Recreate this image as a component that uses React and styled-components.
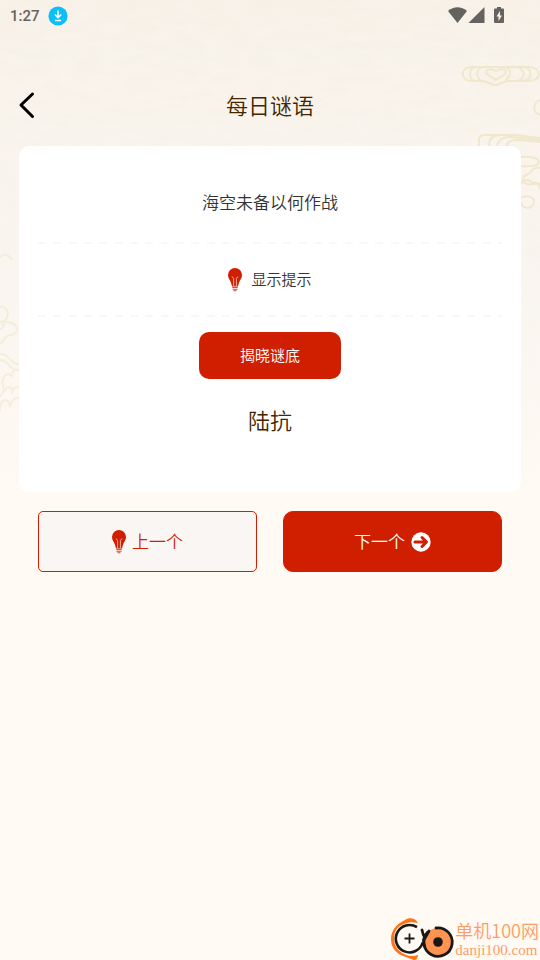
import React from 'react';
import styled, { createGlobalStyle } from 'styled-components';

const GlobalStyle = createGlobalStyle`
  *, *::before, *::after { box-sizing: border-box; }
  body {
    margin: 0;
    background: #fffaf3;
    color: #333;
    font-family: "Noto Sans CJK SC", sans-serif;
    font-weight: 350;
  }
  button { font: inherit; cursor: pointer; }
`;

const Page = styled.div`
  position: relative;
  min-height: 100vh;
  display: flex;
  flex-direction: column;
  background: linear-gradient(#f6f0e6 0, #f8f3eb 160px, #f9f5ef 300px, #fffaf3 500px);
  overflow: hidden;
`;

const Clouds = styled.svg`
  position: absolute;
  top: ${(p) => p.$top};
  left: ${(p) => p.$left || 'auto'};
  right: ${(p) => p.$right || 'auto'};
  fill: none;
  stroke: #efe6c8;
  stroke-width: 2;
  opacity: ${(p) => p.$opacity || 1};
`;

const PaperGrain = styled.svg`
  position: absolute;
  inset: 0;
  width: 100%;
  height: 480px;
  opacity: 0.35;
  mask-image: linear-gradient(#000 40%, transparent);
`;

const StatusBar = styled.div`
  position: relative;
  height: 32px;
  padding: 0 34px 0 10px;
  display: flex;
  align-items: center;
  justify-content: space-between;
  color: #656360;
  font: 500 15px/32px Roboto, sans-serif;
`;

const StatusGroup = styled.div`
  display: flex;
  align-items: center;
  gap: 8px;
`;

const Header = styled.header`
  position: relative;
  height: 114px;
  padding: 32px 12px 0;
  display: grid;
  grid-template-columns: 32px 1fr 32px;
  align-items: center;
`;

const BackButton = styled.button`
  display: flex;
  padding: 0 0 0 6px;
  border: 0;
  background: none;
`;

const Title = styled.h1`
  margin: 0;
  padding-bottom: 2px;
  color: #442500;
  font-size: 22px;
  line-height: 32px;
  font-weight: inherit;
  text-align: center;
`;

const Card = styled.main`
  position: relative;
  margin: 0 19px;
  padding: 16px 19px 57px;
  border-radius: 10px;
  background: #fff;
  display: flex;
  flex-direction: column;
  align-items: center;
`;

const Question = styled.p`
  margin: 0;
  font-size: 17px;
  line-height: 80px;
`;

const Divider = styled.hr`
  width: 100%;
  height: 2px;
  margin: 0;
  border: 0;
  background: repeating-linear-gradient(
    90deg,
    #f8f8f8 0 8px,
    transparent 8px 15px,
    #f8f8f8 15px 23px,
    transparent 23px 31px,
    #f8f8f8 31px 39px,
    transparent 39px 46px
  );
`;

const ButtonLabel = styled.span`
  padding-bottom: 2px;
`;

const HintButton = styled.button`
  height: 71px;
  display: flex;
  align-items: center;
  gap: 9px;
  padding: 0;
  border: 0;
  background: none;
  color: #333;
  font-size: 15px;
`;

const RevealButton = styled.button`
  width: 142px;
  height: 47px;
  margin-top: 15px;
  padding: 0 0 2px;
  border: 0;
  border-radius: 10px;
  background: #d01f00;
  color: #fff;
  font-size: 15px;
`;

const Answer = styled.p`
  margin: 24px 0 0;
  color: #442500;
  font-size: 22px;
  line-height: 32px;
`;

const Pager = styled.nav`
  position: relative;
  display: grid;
  grid-template-columns: 1fr 1fr;
  gap: 26px;
  padding: 19px 38px;
`;

const PagerButton = styled.button`
  height: 61px;
  display: flex;
  align-items: center;
  justify-content: center;
  gap: 6px;
  padding: 0;
  border: 1px solid #d01f00;
  border-radius: ${(p) => (p.$filled ? '10px' : '5px')};
  background: ${(p) => (p.$filled ? '#d01f00' : '#faf6f4')};
  color: ${(p) => (p.$filled ? '#fff' : '#d01f00')};
  font-size: 17px;
`;

const Brand = styled.footer`
  margin-top: auto;
  padding-right: 1px;
  display: flex;
  justify-content: flex-end;
  align-items: flex-end;
  color: #ff9c66;
`;

const BrandText = styled.div`
  display: flex;
  flex-direction: column;
  padding-bottom: 1px;
`;

const BrandName = styled.span`
  font-size: 18px;
  line-height: 24px;
`;

const BrandUrl = styled.span`
  font: 15px/17px "Liberation Serif", serif;
`;

const Bulb = () => (
  <svg width="14" height="24" viewBox="0 0 14 24" aria-hidden="true">
    <path d="M7 0a7 7 0 0 0-7 7c0 3 1.700 4.700 2.700 7 .7 1.600.9 3 1.300 4.500h6c.4-1.500.6-2.900 1.300-4.500C12.300 11.700 14 10 14 7a7 7 0 0 0-7-7Z" fill="#d01f00" />
    <path d="M4 8.500 5.600 10.500v7.500M10 8.500 8.400 10.500v7.500" fill="none" stroke="#fff" strokeWidth=".8" opacity=".8" />
    <path d="M4.300 19.500h5.400M4.500 21.200h5M5.500 22.700h3" stroke="#d94732" strokeWidth="1.100" />
  </svg>
);

const DownloadIcon = () => (
  <svg width="20" height="20" viewBox="0 0 20 20" aria-hidden="true">
    <circle cx="10" cy="10" r="9.600" fill="#0bbffb" />
    <path d="M10 4.500v7M6.900 8.500l3.100 3.200 3.100-3.200M7 14.500h6" fill="none" stroke="#fff" strokeWidth="1.600" />
  </svg>
);

const SignalIcons = () => (
  <svg width="58" height="18" viewBox="0 0 58 18" fill="#656360" aria-label="Wi-Fi, 信号, 电池">
    <path d="M0 4C6-1 13-1 19 4L9.500 16Z" />
    <path d="M36.500 0v16H20.500Z" />
    <path d="M49 1.500V0h4v1.500h2q1 0 1 1V15q0 1-1 1h-8q-1 0-1-1V2.500q0-1 1-1Z" />
    <path d="M52 4 48.500 9.500H50.500v4.500L54 8.500h-2Z" fill="#f6f0e6" />
  </svg>
);

const BrandLogo = () => (
  <svg width="64" height="42" viewBox="0 0 64 42" fill="none" aria-hidden="true">
    <path d="M27 5C25 0 18-1 14 2 5 6 0 13 0 21c0 9 6 15 12 17 4 1 7 3 11 4 2 0 4-2 4-5-5 2-10 1-14-1C7 33 3 28 3 20 3 13 7 8 13 6c5-2 9-2 14-1Z" fill="#ff7417" />
    <circle cx="18.500" cy="20.500" r="13.500" fill="#fffaf3" />
    <path d="M26 9.200A13.700 13.700 0 1 0 31.700 24.500" stroke="#1c1717" strokeWidth="2.600" />
    <circle cx="47" cy="24" r="14" fill="#ff9450" />
    <path d="M45 10A14.200 14.200 0 1 1 37 14M31 12q1 5 3 8l4-7" stroke="#1c1717" strokeWidth="2.800" strokeLinecap="round" strokeLinejoin="round" />
    <path d="M37 14Q30 21 34 29" stroke="#1c1717" strokeWidth="2.800" />
    <circle cx="47" cy="24" r="4.800" fill="#1c1717" />
    <path d="M13.500 20.500h10M18.500 15.500v10" stroke="#1c1717" strokeWidth="1.800" />
  </svg>
);

export default function App() {
  return (
    <Page>
      <GlobalStyle />
      <PaperGrain aria-hidden="true">
        <filter id="grain">
          <feTurbulence type="fractalNoise" baseFrequency="0.04 0.12" numOctaves="3" seed="4" />
          <feColorMatrix values="0 0 0 0 1  0 0 0 0 0.98  0 0 0 0 0.95  1.2 0 0 0 -0.3" />
        </filter>
        <rect width="100%" height="100%" filter="url(#grain)" />
      </PaperGrain>
      <Clouds width="80" height="180" viewBox="0 0 80 180" $top="60px" $right="0" $opacity="0.85" aria-hidden="true">
        <path d="M11 7h58c13 0 13 14 0 14H49c-7 0-9 4-14 4s-7-4-14-4H11C0 21 0 7 11 7Zm5 0c-8 0-8 14 0 14m8-14c-9 0-9 14 0 14M56 7c10 0 10 14 0 14m7-14c10 0 10 14 0 14M36 11c-6-3-12-2-9 3l9 6 9-6c3-5-3-6-9-3ZM43 7c8 0 9 8 3 13" />
        <path d="M81 40c-9 1-9 14 0 15M19 86V80q0-5 6-5h30l26 3M29 86q0-11 11-11M37 86q2-10 15-9l29 3M47 86c0-6 7-6 11-6l23 2M60 97c14-1 21 2 18 7-3 3-18 2-18 2M81 108c-10-2-9 5-13 6-5 2-7 6-3 9 4 4 10-1 16 1M60 125c3-6 10-6 12-2 9-2 7 5 9 7M60 138c8-4 14 0 14 3 0 10-13 8-13 1" />
      </Clouds>
      <Clouds width="20" height="170" viewBox="0 0 20 170" $top="245px" $left="0" $opacity="0.5" aria-hidden="true">
        <path d="M0 12c5-4 8-3 12 3M0 62c11-1 10 15 0 15h7c12 1 13 11 4 13-7 0-7 7-11 9m0-23c7 5 1 9 0 8m0 25c11 0 8 9 20 11m-20-5c9 0 7 9 18 10M4 145c-4-12 2-20 8-14 0-7 7-8 8-4M0 152c8-15 14-10 12-3 0-7 7-9 8-5M0 166c0-14 9-14 10-4 2-9 8-12 10-6" />
      </Clouds>
      <StatusBar>
        <StatusGroup><span>1:27</span><DownloadIcon /></StatusGroup>
        <StatusGroup><SignalIcons /></StatusGroup>
      </StatusBar>
      <Header>
        <BackButton aria-label="返回">
          <svg width="18" height="28" viewBox="0 0 18 28" fill="none" aria-hidden="true">
            <path d="M14.500 3 3 14l11.500 11.500" stroke="#000" strokeWidth="3" strokeLinecap="round" strokeLinejoin="round" />
          </svg>
        </BackButton>
        <Title>每日谜语</Title>
      </Header>
      <Card>
        <Question>海空未备以何作战</Question>
        <Divider />
        <HintButton><Bulb /><ButtonLabel>显示提示</ButtonLabel></HintButton>
        <Divider />
        <RevealButton>揭晓谜底</RevealButton>
        <Answer>陆抗</Answer>
      </Card>
      <Pager>
        <PagerButton><Bulb /><ButtonLabel>上一个</ButtonLabel></PagerButton>
        <PagerButton $filled>
          <ButtonLabel>下一个</ButtonLabel>
          <svg width="20" height="20" viewBox="0 0 20 20" fill="none" aria-hidden="true">
            <circle cx="10" cy="10" r="9.700" fill="#fff" />
            <path d="M4 10h11M11 5.500l4.500 4.500-4.500 4.500" stroke="#d01f00" strokeWidth="3" strokeLinecap="round" strokeLinejoin="round" />
          </svg>
        </PagerButton>
      </Pager>
      <Brand>
        <BrandLogo />
        <BrandText>
          <BrandName>单机100网</BrandName>
          <BrandUrl>danji100.com</BrandUrl>
        </BrandText>
      </Brand>
    </Page>
  );
}
